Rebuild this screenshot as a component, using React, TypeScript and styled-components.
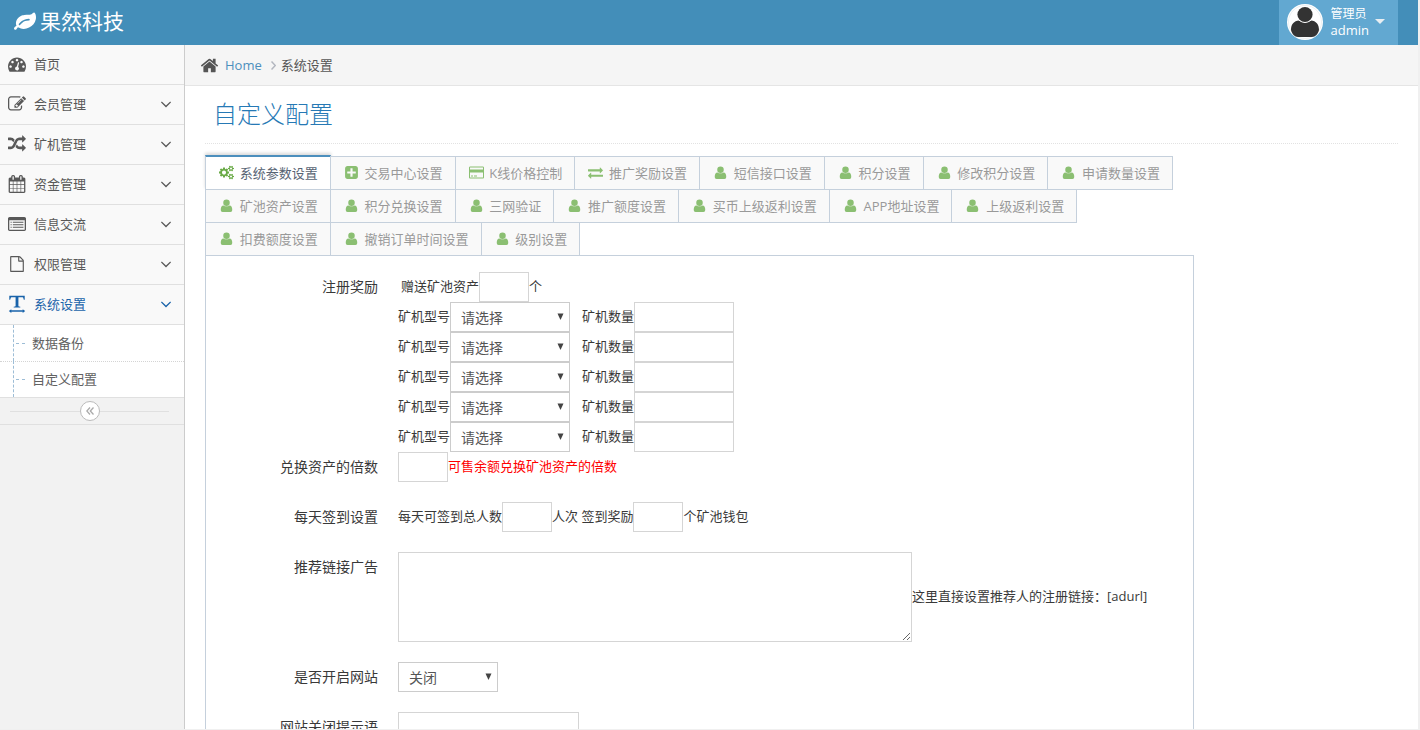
import React from "react";
import styled, { createGlobalStyle, css } from "styled-components";

const GlobalStyle = createGlobalStyle`
  * { box-sizing: border-box; }
  body {
    margin: 0;
    background: #f0f0f0;
    color: #393939;
    font-family: "Open Sans", "Noto Sans CJK SC", sans-serif;
    font-size: 13px;
    line-height: 20px;
  }
  a { color: inherit; text-decoration: none; }
  button, input, select, textarea { font-family: inherit; border-radius: 0; outline: none; }
`;

/* ---------- icons ---------- */

type Glyph = { d: string; w?: number };

const glyphs: Record<string, Glyph> = {
  leaf: {
    d: "M1280 704q0-26-19-45t-45-19q-172 0-318 49.5t-259.5 134-235.5 219.5q-19 21-19 45 0 26 19 45t45 19q24 0 45-19 27-24 74-71t67-66q137-124 268.5-176t313.5-52q26 0 45-19t19-45zm512-198q0 95-20 193-46 224-184.5 383t-357.5 268q-214 108-438 108-148 0-286-47-15-5-88-42t-96-37q-16 0-39.5 32t-45 70-52.5 70-60 32q-43 0-63.5-17.5t-45.5-59.5q-2-4-6-11t-5.5-10-3-9.5-1.5-13.5q0-35 31-73.5t68-65.5 68-56 31-48q0-4-14-38t-16-44q-9-51-9-104 0-115 43.5-220t119-184.5 170.5-139 204-95.5q55-18 145-25.5t179.5-9 178.5-6 163.5-24 113.5-56.5l29.5-29.5 29.5-28 27-20 36.5-16 43.5-4.5q39 0 70.5 46t47.5 112 24 124 8 96z",
  },
  dashboard: {
    d: "M384 1152q0-53-37.5-90.5t-90.5-37.5-90.5 37.5-37.5 90.5 37.5 90.5 90.5 37.5 90.5-37.5 37.5-90.5zm192-448q0-53-37.5-90.5t-90.5-37.5-90.5 37.5-37.5 90.5 37.5 90.5 90.5 37.5 90.5-37.5 37.5-90.5zm428 481l101-382q6-26-7.5-48.5t-38.5-29.5-48 6.5-30 39.5l-101 382q-60 5-107 43.5t-63 98.5q-20 77 20 146t117 89 146-20 89-117q16-60-6-117t-72-91zm660-33q0-53-37.5-90.5t-90.5-37.5-90.5 37.5-37.5 90.5 37.5 90.5 90.5 37.5 90.5-37.5 37.5-90.5zm-640-640q0-53-37.5-90.5t-90.5-37.5-90.5 37.5-37.5 90.5 37.5 90.5 90.5 37.5 90.5-37.5 37.5-90.5zm448 192q0-53-37.5-90.5t-90.5-37.5-90.5 37.5-37.5 90.5 37.5 90.5 90.5 37.5 90.5-37.5 37.5-90.5zm320 448q0 261-141 483-19 29-54 29h-1402q-35 0-54-29-141-221-141-483 0-182 71-348t191-286 286-191 348-71 348 71 286 191 191 286 71 348z",
  },
  edit: {
    d: "M888 1184l116-116-152-152-116 116v56h96v96h56zm440-720q-16-16-33 1l-350 350q-17 17-1 33t33-1l350-350q17-17 1-33zm80 594v190q0 119-84.5 203.5t-203.5 84.5h-832q-119 0-203.5-84.5t-84.5-203.5v-832q0-119 84.5-203.5t203.5-84.5h832q63 0 117 25 15 7 18 23 3 17-9 29l-49 49q-14 14-32 8-23-6-45-6h-832q-66 0-113 47t-47 113v832q0 66 47 113t113 47h832q66 0 113-47t47-113v-126q0-13 9-22l64-64q15-15 35-7t20 29zm-96-738l288 288-672 672h-288v-288zm444 132l-92 92-288-288 92-92q28-28 68-28t68 28l152 152q28 28 28 68t-28 68z",
  },
  random: {
    d: "M666 481q-60 92-137 273-22-45-37-72.5t-40.5-63.5-51-56.5-63-35-81.5-14.5h-224q-14 0-23-9t-9-23v-192q0-14 9-23t23-9h224q250 0 410 225zm1126 799q0 14-9 23l-320 320q-9 9-23 9-13 0-22.5-9.5t-9.5-22.5v-192q-32 0-85 .5t-81 1-73-1-71-5-64-10.5-63-18.5-58-28.5-59-40-55-53.5-56-69.5q59-93 136-273 22 45 37 72.5t40.5 63.5 51 56.5 63 35 81.5 14.5h256v-192q0-14 9-23t23-9q12 0 24 10l319 319q9 9 9 23zm0-896q0 14-9 23l-320 320q-9 9-23 9-13 0-22.5-9.5t-9.5-22.5v-192h-256q-48 0-87 15t-69 45-51 61.5-45 77.5q-32 62-78 171-29 66-49.5 111t-54 105-64 100-74 83-90 68.5-106.5 42-128 16.5h-224q-14 0-23-9t-9-23v-192q0-14 9-23t23-9h224q48 0 87-15t69-45 51-61.5 45-77.5q32-62 78-171 29-66 49.5-111t54-105 64-100 74-83 90-68.5 106.5-42 128-16.5h256v-192q0-14 9-23t23-9q12 0 24 10l319 319q9 9 9 23z",
  },
  calendar: {
    d: "M192 1664h288v-288h-288v288zm352 0h320v-288h-320v288zm-352-352h288v-320h-288v320zm352 0h320v-320h-320v320zm-352-384h288v-288h-288v288zm736 736h320v-288h-320v288zm-384-736h320v-288h-320v288zm768 736h288v-288h-288v288zm-384-352h320v-320h-320v320zm-352-864v-288q0-13-9.5-22.5t-22.5-9.5h-64q-13 0-22.5 9.5t-9.5 22.5v288q0 13 9.5 22.5t22.5 9.5h64q13 0 22.5-9.5t9.5-22.5zm736 864h288v-320h-288v320zm-384-384h320v-288h-320v288zm384 0h288v-288h-288v288zm32-480v-288q0-13-9.5-22.5t-22.5-9.5h-64q-13 0-22.5 9.5t-9.5 22.5v288q0 13 9.5 22.5t22.5 9.5h64q13 0 22.5-9.5t9.5-22.5zm384-64v1280q0 52-38 90t-90 38h-1408q-52 0-90-38t-38-90v-1280q0-52 38-90t90-38h128v-96q0-66 47-113t113-47h64q66 0 113 47t47 113v96h384v-96q0-66 47-113t113-47h64q66 0 113 47t47 113v96h128q52 0 90 38t38 90z",
  },
  list: {
    d: "M256 660h110v100h-110zM256 916h110v100h-110zM256 1172h110v100h-110zM480 660h1056v100h-1056zM480 916h1056v100h-1056zM480 1172h1056v100h-1056zM160 192h1472q66 0 113 47t47 113v1088q0 66-47 113t-113 47h-1472q-66 0-113-47t-47-113v-1088q0-66 47-113t113-47zM128 512v928q0 13 9.500 22.500t22.500 9.500h1472q13 0 22.500-9.500t9.500-22.500v-928z",
  },
  file: {
    d: "M1596 380q28 28 48 76t20 88v1152q0 40-28 68t-68 28h-1344q-40 0-68-28t-28-68v-1600q0-40 28-68t68-28h896q40 0 88 20t76 48zm-444-244v376h376q-10-29-22-41l-313-313q-12-12-41-22zm384 1528v-1024h-416q-40 0-68-28t-28-68v-416h-768v1536h1280z",
  },
  textWidth: {
    d: "M128 64h1536v400h-90l-60-200q-10-40-60-40h-418v840q0 60 50 74l140 40v66h-660v-66l140-40q50-14 50-74v-840h-418q-50 0-60 40l-60 200h-90zM330 1408v110h1132v-110l250 188-250 188v-110h-1132v110l-250-188z",
  },
  home: {
    d: "M1472 992v480q0 26-19 45t-45 19h-384v-384h-256v384h-384q-26 0-45-19t-19-45v-480q0-1 .5-3t.5-3l575-474 575 474q1 2 1 6zm223-69l-62 74q-8 9-21 11h-3q-13 0-21-7l-692-577-692 577q-12 8-24 7-13-2-21-11l-62-74q-8-10-7-23.5t11-21.5l719-599q32-26 76-26t76 26l244 204v-195q0-14 9-23t23-9h192q14 0 23 9t9 23v408l219 182q10 8 11 21.5t-7 23.5z",
  },
  user: {
    d: "M208 1420C208 1130 300 884 547 884Q700 994 896 994T1245 884C1492 884 1584 1130 1584 1420Q1584 1664 1372 1664H420Q208 1664 208 1420ZM896 170a390 390 0 1 1 0 780a390 390 0 1 1 0-780z",
  },
  plus: {
    d: "M1408 960v-128q0-26-19-45t-45-19h-320v-320q0-26-19-45t-45-19h-128q-26 0-45 19t-19 45v320h-320q-26 0-45 19t-19 45v128q0 26 19 45t45 19h320v320q0 26 19 45t45 19h128q26 0 45-19t19-45v-320h320q26 0 45-19t19-45zm256-544v960q0 119-84.5 203.5t-203.5 84.5h-960q-119 0-203.5-84.5t-84.5-203.5v-960q0-119 84.5-203.5t203.5-84.5h960q119 0 203.5 84.5t84.5 203.5z",
  },
  card: {
    w: 1920,
    d: "M1760 128q66 0 113 47t47 113v1216q0 66-47 113t-113 47h-1600q-66 0-113-47t-47-113v-1216q0-66 47-113t113-47zM160 256q-13 0-22.500 9.500t-9.500 22.500v224h1664v-224q0-13-9.500-22.500t-22.500-9.500zM1760 1536q13 0 22.500-9.500t9.500-22.500v-608h-1664v608q0 13 9.500 22.500t22.500 9.500zM256 1408v-128h256v128zM640 1408v-128h384v128z",
  },
  exchange: {
    d: "M1792 1184v192q0 13-9.5 22.5t-22.5 9.5h-1376v192q0 13-9.5 22.5t-22.5 9.5q-12 0-24-10l-319-320q-9-9-9-22 0-14 9-23l320-320q9-9 23-9 13 0 22.5 9.5t9.5 22.5v192h1376q13 0 22.5 9.5t9.5 22.5zm0-544q0 14-9 23l-320 320q-9 9-23 9-13 0-22.5-9.5t-9.5-22.5v-192h-1376q-13 0-22.5-9.5t-9.5-22.5v-192q0-13 9.5-22.5t22.5-9.5h1376v-192q0-14 9-23t23-9q12 0 24 10l319 319q9 9 9 23z",
  },
  cogs: {
    w: 1920,
    d: "M896 896q0-106-75-181t-181-75-181 75-75 181 75 181 181 75 181-75 75-181zm768 512q0-52-38-90t-90-38-90 38-38 90q0 53 37.5 90.5t90.5 37.5 90.5-37.5 37.5-90.5zm0-1024q0-52-38-90t-90-38-90 38-38 90q0 53 37.5 90.5t90.5 37.5 90.5-37.5 37.5-90.5zm-384 421v185q0 10-7 19.5t-16 10.5l-155 24q-11 35-32 76 34 48 90 115 7 11 7 20 0 12-7 19-23 30-82.5 89.5t-78.5 59.5q-11 0-21-7l-115-90q-37 19-77 31-11 108-23 155-7 24-30 24h-186q-11 0-20-7.5t-10-17.5l-23-153q-34-10-75-31l-118 89q-7 7-20 7-11 0-21-8-144-133-144-160 0-9 7-19 10-14 41-53t47-61q-23-44-35-82l-152-24q-10-1-17-9.5t-7-19.5v-185q0-10 7-19.5t16-10.5l155-24q11-35 32-76-34-48-90-115-7-11-7-20 0-12 7-20 22-30 82-89t79-59q11 0 21 7l115 90q34-18 77-32 11-108 23-154 7-24 30-24h186q11 0 20 7.5t10 17.5l23 153q34 10 75 31l118-89q8-7 20-7 11 0 21 8 144 133 144 160 0 8-7 19-12 16-42 54t-45 60q23 48 34 82l152 23q10 2 17 10.5t7 19.5zm640 533v140q0 16-149 31-12 27-30 52 51 113 51 138 0 4-4 7-122 71-124 71-8 0-46-47t-52-68q-20 2-30 2t-30-2q-14 21-52 68t-46 47q-2 0-124-71-4-3-4-7 0-25 51-138-18-25-30-52-149-15-149-31v-140q0-16 149-31 13-29 30-52-51-113-51-138 0-4 4-7 4-2 35-20t59-34 30-16q8 0 46 46.5t52 67.5q20-2 30-2t30 2q51-71 92-112l6-2q4 0 124 70 4 3 4 7 0 25-51 138 17 23 30 52 149 15 149 31zm0-1024v140q0 16-149 31-12 27-30 52 51 113 51 138 0 4-4 7-122 71-124 71-8 0-46-47t-52-68q-20 2-30 2t-30-2q-14 21-52 68t-46 47q-2 0-124-71-4-3-4-7 0-25 51-138-18-25-30-52-149-15-149-31v-140q0-16 149-31 13-29 30-52-51-113-51-138 0-4 4-7 4-2 35-20t59-34 30-16q8 0 46 46.5t52 67.5q20-2 30-2t30 2q51-71 92-112l6-2q4 0 124 70 4 3 4 7 0 25-51 138 17 23 30 52 149 15 149 31z",
  },
  angleDown: {
    d: "M1395 736q0 13-10 23l-466 466q-10 10-23 10t-23-10l-466-466q-10-10-10-23t10-23l50-50q10-10 23-10t23 10l393 393 393-393q10-10 23-10t23 10l50 50q10 10 10 23z",
  },
};

function Icon({ name, size = 18, className }: { name: string; size?: number; className?: string }) {
  const { d, w = 1792 } = glyphs[name];
  return (
    <svg
      className={className}
      width={size}
      height={size}
      viewBox={`0 0 ${w} 1792`}
      fill="currentColor"
      fillRule="evenodd"
      aria-hidden="true"
    >
      <path d={d} />
    </svg>
  );
}

/* ---------- frame ---------- */

const Page = styled.div`
  display: flex;
  flex-direction: column;
  height: 100vh;
  padding: 0 2px 1px 0;
`;

const Navbar = styled.header`
  display: flex;
  flex: none;
  justify-content: space-between;
  height: 45px;
  padding: 0 20px 0 14px;
  background: #438eb9;
  color: #fff;
`;

const Brand = styled.a`
  display: flex;
  align-items: center;
  gap: 4px;
  font-size: 21px;
  line-height: 43px;
  padding-bottom: 2px;
`;

const UserButton = styled.button`
  display: flex;
  align-items: center;
  padding: 0 13px 2px 8px;
  border: 0;
  background: #62a8d1;
  color: #fff;
  font-size: 13px;
  line-height: 16px;
  text-align: left;
`;

const UserText = styled.span`
  display: block;
  margin: 0 6px 0 8px;
  small { display: block; font-size: 12px; }
`;

const Columns = styled.div`
  display: flex;
  flex: 1;
  min-height: 0;
`;

/* ---------- sidebar ---------- */

const Sidebar = styled.nav`
  flex: none;
  width: 185px;
  border-right: 1px solid #ccc;
  background: #f2f2f2;
`;

const MenuList = styled.ul`
  margin: 0;
  padding: 0;
  list-style: none;
`;

const MenuLink = styled.a<{ $active?: boolean }>`
  display: flex;
  align-items: center;
  gap: 8px;
  height: 40px;
  padding: 0 9px 2px 8px;
  border-bottom: 1px solid #e0e0e0;
  background: #f9f9f9;
  color: ${(p) => (p.$active ? "#1963aa" : "#585858")};
  span { flex: 1; }
`;

const SubList = styled(MenuList)`
  border-bottom: 1px solid #e0e0e0;
  background: #fff;
`;

const SubItem = styled.li`
  display: flex;
  align-items: center;
  height: 36px;
  margin-left: 13px;
  border-left: 1px dashed #9dbdd6;
  color: #616161;
  &::before {
    content: "";
    width: 9px;
    margin: 0 7px 0 2px;
    border-top: 1px dashed #9dbdd6;
  }
`;

const SubDivider = styled.li`
  margin-bottom: -1px;
  border-top: 1px dotted #d4d4d4;
`;

const Collapse = styled.div`
  display: flex;
  align-items: center;
  height: 27px;
  padding: 0 15px 0 10px;
  border-bottom: 1px solid #e0e0e0;
  &::before, &::after {
    content: "";
    flex: 1;
    border-top: 1px solid #e0e0e0;
  }
`;

const CollapseButton = styled.button`
  display: flex;
  align-items: center;
  justify-content: center;
  width: 20px;
  height: 20px;
  padding: 0;
  border: 1px solid #bbb;
  background: #fff;
  color: #aaa;
  && { border-radius: 50%; }
`;

/* ---------- main ---------- */

const Main = styled.main`
  flex: 1;
  min-width: 0;
  overflow-y: auto;
  scrollbar-width: none;
  background: #fff;
`;

const Breadcrumb = styled.div`
  display: flex;
  align-items: center;
  height: 41px;
  padding: 0 15px;
  border-bottom: 1px solid #e5e5e5;
  background: #f5f5f5;
  color: #555;
  a { margin: 0 9px 0 6px; color: #4c8fbd; }
  .sep { margin-right: 5px; color: #b2b6bf; }
`;

const Content = styled.div`
  padding: 0 20px 24px;
`;

const Title = styled.h1`
  margin: 0 0 12px;
  padding: 11px 8px 12px;
  border-bottom: 1px dotted #e2e2e2;
  color: #2679b5;
  font-size: 24px;
  font-weight: 300;
  line-height: 34px;
`;

const TabArea = styled.div`
  margin-right: 204px;
`;

const TabList = styled.div`
  display: flex;
  flex-wrap: wrap;
`;

const Tab = styled.button<{ $active?: boolean }>`
  height: 34px;
  margin: 0 -1px -1px 0;
  padding: 0 12px;
  border: 1px solid #c5d0dc;
  background: #f9f9f9;
  color: #999;
  font-size: 13px;
  line-height: 32px;
  white-space: pre;
  .glyph {
    margin: 0 -1px 0 1px;
    vertical-align: -2px;
    color: #8bbf72;
  }
  ${(p) =>
    p.$active &&
    css`
      height: 35px;
      margin-top: -1px;
      border-top: 2px solid #4c8fbd;
      border-bottom-color: #fff;
      background: #fff;
      color: #576373;
      box-shadow: 0 -2px 3px 0 rgba(0, 0, 0, 0.15);
      .glyph { color: #69aa46; }
    `}
`;

const Panel = styled.form`
  display: flex;
  flex-direction: column;
  gap: 20px;
  padding: 16px 12px;
  border: 1px solid #c5d0dc;
`;

const Group = styled.div`
  display: flex;
  flex-direction: column;
`;

const Row = styled.div`
  display: flex;
`;

const RowLabel = styled.label`
  flex: none;
  width: 160px;
  margin-right: 20px;
  font-size: 14px;
  line-height: 30px;
  text-align: right;
`;

const Stack = styled.div`
  display: flex;
  flex-direction: column;
`;

const Line = styled.div<{ $indent?: boolean }>`
  display: flex;
  align-items: center;
  padding-left: ${(p) => (p.$indent ? 3 : 0)}px;
  line-height: 28px;
  white-space: pre;
`;

const InlineLabel = styled.label<{ $gap?: boolean }>`
  padding-bottom: 2px;
  margin-left: ${(p) => (p.$gap ? 12 : 0)}px;
`;

const Note = styled.span<{ $warn?: boolean }>`
  padding-bottom: 2px;
  color: ${(p) => (p.$warn ? "#f00" : "inherit")};
`;

const TextInput = styled.input<{ $w: number }>`
  width: ${(p) => p.$w}px;
  height: 30px;
  padding: 4px;
  border: 1px solid #d5d5d5;
  background: #fff;
  color: #858585;
  font-size: 14px;
`;

const TextArea = styled.textarea`
  display: block;
  width: 514px;
  height: 90px;
  padding: 4px;
  border: 1px solid #d5d5d5;
  color: #858585;
  font-size: 14px;
`;

const SelectBox = styled.span<{ $w: number }>`
  position: relative;
  display: block;
  width: ${(p) => p.$w}px;
  height: 30px;
  select {
    appearance: none;
    display: block;
    width: 100%;
    height: 30px;
    padding: 2px 20px 0 10px;
    border: 1px solid #ccc;
    background: #fff;
    color: #555;
    font-size: 14px;
    line-height: 26px;
  }
  svg {
    position: absolute;
    top: 11px;
    right: 6px;
    pointer-events: none;
  }
`;

function Select({ id, width, options }: { id: string; width: number; options: string[] }) {
  return (
    <SelectBox $w={width}>
      <select id={id}>
        {options.map((o) => (
          <option key={o}>{o}</option>
        ))}
      </select>
      <svg width="7" height="7" viewBox="0 0 7 7" fill="#444" aria-hidden="true">
        <path d="M0.500 0.500h6L3.500 7z" />
      </svg>
    </SelectBox>
  );
}

const menu = [
  { icon: "dashboard", text: "首页", leaf: true },
  { icon: "edit", text: "会员管理" },
  { icon: "random", text: "矿机管理" },
  { icon: "calendar", text: "资金管理" },
  { icon: "list", text: "信息交流" },
  { icon: "file", text: "权限管理", size: 16 },
  { icon: "textWidth", text: "系统设置", active: true },
];

const tabs: [string, string][] = [
  ["cogs", "系统参数设置"],
  ["plus", "交易中心设置"],
  ["card", "K线价格控制"],
  ["exchange", "推广奖励设置"],
  ["user", "短信接口设置"],
  ["user", "积分设置"],
  ["user", "修改积分设置"],
  ["user", "申请数量设置"],
  ["user", "矿池资产设置"],
  ["user", "积分兑换设置"],
  ["user", "三网验证"],
  ["user", "推广额度设置"],
  ["user", "买币上级返利设置"],
  ["user", "APP地址设置"],
  ["user", "上级返利设置"],
  ["user", "扣费额度设置"],
  ["user", "撤销订单时间设置"],
  ["user", "级别设置"],
];

const IconSlot = styled.i`
  display: flex;
  justify-content: center;
  width: 18px;
`;

export default function App() {
  return (
    <Page>
      <GlobalStyle />
      <Navbar>
        <Brand href="#">
          <Icon name="leaf" size={22} />
          果然科技
        </Brand>
        <UserButton type="button">
          <svg width="36" height="36" viewBox="0 0 36 36" aria-hidden="true">
            <circle cx="18" cy="18" r="18" fill="#fff" />
            <circle cx="18" cy="18" r="16.500" fill="none" stroke="#dfe6ea" strokeWidth="0.600" />
            <path
              d="M4 26c0-6 3-9 8-9.500 3 2.500 9 2.500 12 0 5 .5 8 3.500 8 9.500-1 4-3.500 7-7 7h-14c-3.500 0-6-3-7-7z"
              fill="#333"
            />
            <circle cx="18" cy="10.500" r="8.500" fill="#fff" />
            <circle cx="18" cy="10.500" r="7.600" fill="#333" />
          </svg>
          <UserText>
            <small>管理员</small>
            admin
          </UserText>
          <svg width="10" height="5" viewBox="0 0 10 5" fill="#e8eef2" aria-hidden="true">
            <path d="M0 0h10L5 5z" />
          </svg>
        </UserButton>
      </Navbar>
      <Columns>
        <Sidebar>
          <MenuList>
            {menu.map((m) => (
              <li key={m.text}>
                <MenuLink href="#" $active={m.active}>
                  <IconSlot>
                    <Icon name={m.icon} size={m.size} />
                  </IconSlot>
                  <span>{m.text}</span>
                  {!m.leaf && <Icon name="angleDown" />}
                </MenuLink>
              </li>
            ))}
          </MenuList>
          <SubList>
            <SubItem>
              <a href="#">数据备份</a>
            </SubItem>
            <SubDivider />
            <SubItem>
              <a href="#">自定义配置</a>
            </SubItem>
          </SubList>
          <Collapse>
            <CollapseButton type="button" aria-label="collapse">
              <svg width="8" height="8" viewBox="0 0 8 8" fill="none" stroke="currentColor" strokeWidth="1.300">
                <path d="M4 0.500L0.800 4L4 7.500M7.500 0.500L4.300 4L7.500 7.500" />
              </svg>
            </CollapseButton>
          </Collapse>
        </Sidebar>
        <Main>
          <Breadcrumb>
            <Icon name="home" size={19} />
            <a href="#">Home</a>
            <svg className="sep" width="5" height="9" viewBox="0 0 5 9" fill="none" stroke="currentColor" strokeWidth="1.500" aria-hidden="true">
              <path d="M0.500 0.500L4.300 4.500L0.500 8.500" />
            </svg>
            <span>系统设置</span>
          </Breadcrumb>
          <Content>
            <Title>自定义配置</Title>
            <TabArea>
              <TabList role="tablist">
                {tabs.map(([icon, text], i) => (
                  <Tab key={text} type="button" role="tab" aria-selected={i === 0} $active={i === 0}>
                    <Icon className="glyph" name={icon} size={15} />
                    {"\u00a0 " + text}
                  </Tab>
                ))}
              </TabList>
              <Panel>
                <Group>
                  <Row>
                    <RowLabel htmlFor="gift">注册奖励</RowLabel>
                    <Stack>
                      <Line $indent>
                        <InlineLabel htmlFor="gift">赠送矿池资产</InlineLabel>
                        <TextInput id="gift" $w={50} />
                        <Note>个</Note>
                      </Line>
                      {[1, 2, 3, 4, 5].map((n) => (
                        <Line key={n}>
                          <InlineLabel htmlFor={`model${n}`}>矿机型号</InlineLabel>
                          <Select id={`model${n}`} width={120} options={["请选择"]} />
                          <InlineLabel htmlFor={`count${n}`} $gap>
                            矿机数量
                          </InlineLabel>
                          <TextInput id={`count${n}`} $w={100} />
                        </Line>
                      ))}
                    </Stack>
                  </Row>
                  <Row>
                    <RowLabel htmlFor="multiple">兑换资产的倍数</RowLabel>
                    <Line>
                      <TextInput id="multiple" $w={50} />
                      <Note $warn>可售余额兑换矿池资产的倍数</Note>
                    </Line>
                  </Row>
                </Group>
                <Row>
                  <RowLabel htmlFor="people">每天签到设置</RowLabel>
                  <Line>
                    <InlineLabel htmlFor="people">每天可签到总人数</InlineLabel>
                    <TextInput id="people" $w={50} />
                    <InlineLabel htmlFor="reward">人次 签到奖励</InlineLabel>
                    <TextInput id="reward" $w={50} />
                    <Note>个矿池钱包</Note>
                  </Line>
                </Row>
                <Row>
                  <RowLabel htmlFor="ad">推荐链接广告</RowLabel>
                  <Line>
                    <TextArea id="ad" />
                    <Note>这里直接设置推荐人的注册链接：[adurl]</Note>
                  </Line>
                </Row>
                <Row>
                  <RowLabel htmlFor="open">是否开启网站</RowLabel>
                  <Select id="open" width={100} options={["关闭", "开启"]} />
                </Row>
                <Row>
                  <RowLabel htmlFor="closed">网站关闭提示语</RowLabel>
                  <TextInput id="closed" $w={181} />
                </Row>
              </Panel>
            </TabArea>
          </Content>
        </Main>
      </Columns>
    </Page>
  );
}
